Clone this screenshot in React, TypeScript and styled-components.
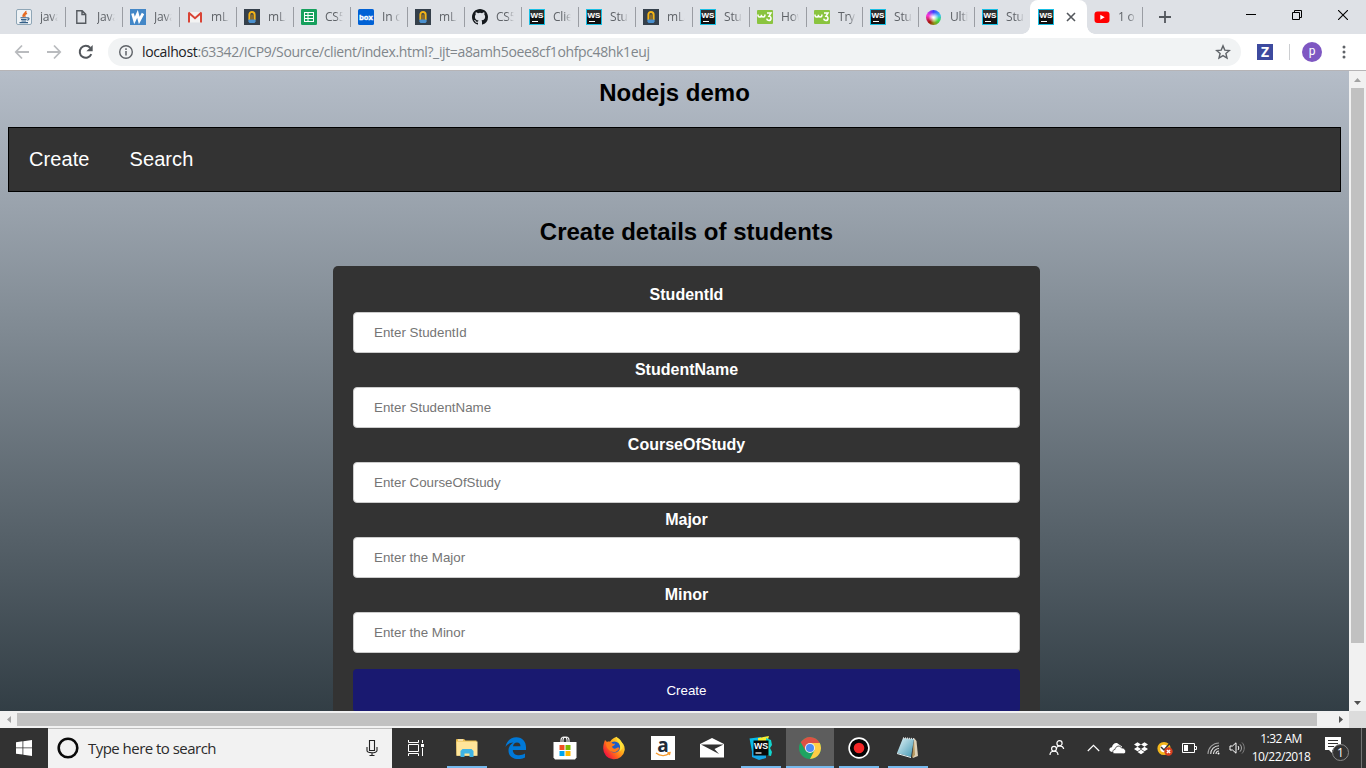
import React from "react";
import styled, { createGlobalStyle } from "styled-components";

const GlobalStyle = createGlobalStyle`
  * { box-sizing: border-box; }
  html, body { margin: 0; padding: 0; overflow: hidden; }
`;

const UI_FONT = '"Open Sans", "Noto Sans", sans-serif';
const PAGE_FONT = '"Liberation Sans", Arial, sans-serif';

const Screen = styled.div`
  width: 1366px;
  height: 768px;
  display: flex;
  flex-direction: column;
  overflow: hidden;
  background: #fff;
  font-family: ${UI_FONT};
`;

/* ---------- Tab strip ---------- */

const TabStrip = styled.div`
  height: 34px;
  flex: none;
  display: flex;
  padding-left: 9px;
  background: #dee1e6;
`;

const TabItem = styled.div<{ $width: number; $divider: boolean }>`
  width: ${(p) => p.$width}px;
  height: 34px;
  flex: none;
  display: flex;
  align-items: center;
  gap: 8px;
  padding-left: 7px;
  background: linear-gradient(#9a9da3, #9a9da3) right 7px / 1px ${(p) => (p.$divider ? 20 : 0)}px no-repeat;
`;

const ActiveTab = styled(TabItem)`
  gap: 11px;
  background: #fff;
  padding-left: 8px;
  border-radius: 8px 8px 0 0;
  position: relative;
  &::before, &::after {
    content: "";
    position: absolute;
    bottom: 0;
    width: 8px;
    height: 8px;
  }
  &::before { left: -8px; background: radial-gradient(circle at 0 0, transparent 7.5px, #fff 8px); }
  &::after { right: -8px; background: radial-gradient(circle at 100% 0, transparent 7.5px, #fff 8px); }
`;

const TabTitle = styled.span`
  width: 18px;
  overflow: hidden;
  white-space: nowrap;
  font-size: 12px;
  line-height: 16px;
  letter-spacing: -0.2px;
  color: #5f6368;
  mask-image: linear-gradient(to right, #000 60%, transparent);
`;

const NewTab = styled.div`
  width: 44px;
  display: flex;
  align-items: center;
  justify-content: center;
`;

const WindowButtons = styled.div`
  margin-left: auto;
  display: flex;
  height: 29px;
`;

const WindowButton = styled.div`
  width: 46px;
  display: flex;
  align-items: center;
  justify-content: center;
`;

/* ---------- Toolbar ---------- */

const Toolbar = styled.div`
  height: 37px;
  flex: none;
  display: flex;
  align-items: center;
  background: #fff;
  border-bottom: 1px solid #b6b4b6;
`;

const NavButtons = styled.div`
  width: 108px;
  display: flex;
  align-items: center;
  gap: 16px;
  padding-left: 14px;
`;

const AddressBar = styled.div`
  width: 1133px;
  height: 28px;
  border-radius: 14px;
  background: #f1f3f4;
  display: flex;
  align-items: center;
  padding: 0 10px;
`;

const Url = styled.span`
  flex: 1;
  margin-left: 8px;
  padding-bottom: 1px;
  font-size: 14px;
  letter-spacing: -0.365px;
  white-space: nowrap;
  color: #80868b;
  b { font-weight: 400; color: #202124; }
`;

const Extension = styled.div`
  width: 16px;
  height: 16px;
  margin-left: 16px;
  background: #3d4a9f;
  color: #fff;
  font: 700 14px/16px ${UI_FONT};
  text-align: center;
`;

const ToolbarRule = styled.div`
  width: 1px;
  height: 16px;
  margin: 0 12px 0 16px;
  background: #ccced1;
`;

const Avatar = styled.div`
  width: 20px;
  height: 20px;
  border-radius: 50%;
  background: #7e57c2;
  color: #fff;
  font: 400 12px/18px Roboto, sans-serif;
  text-align: center;
  margin-right: 19px;
`;

/* ---------- Page ---------- */

const Viewport = styled.div`
  height: 657px;
  flex: none;
  display: grid;
  grid-template-columns: 1349px 17px;
  grid-template-rows: 640px 17px;
`;

const Page = styled.div`
  height: 640px;
  overflow: hidden;
  padding: 8px;
  font-family: ${PAGE_FONT};
  background: linear-gradient(to bottom, #b5bdc8 0%, #828c95 36%, #28343b 100%) 0 0 / 100% 690px;
`;

const Heading = styled.h2`
  margin: 0;
  height: 28px;
  font-size: 24px;
  line-height: 28px;
  text-align: center;
  color: #000;
`;

const NavBar = styled.nav`
  height: 65px;
  margin-top: 20px;
  padding-bottom: 2px;
  border: 1px solid #000;
  background: #333;
  display: flex;
  align-items: center;
`;

const NavLink = styled.a`
  padding: 0 20px;
  font-size: 20px;
  line-height: 24px;
  letter-spacing: 0.08px;
  color: #fff;
`;

const Section = styled.section`
  padding: 26px 0 0 24px;
  display: flex;
  flex-direction: column;
  align-items: center;
`;

const Form = styled.div`
  width: 707px;
  margin-top: 20px;
  padding: 20px;
  border-radius: 5px;
  background: #333;
  display: flex;
  flex-direction: column;
`;

const Label = styled.label`
  height: 18px;
  font-size: 16px;
  font-weight: 700;
  line-height: 18px;
  text-align: center;
  color: #fff;
`;

const Input = styled.input`
  height: 41px;
  margin: 8px 0;
  padding: 0 20px;
  border: 1px solid #ccc;
  border-radius: 4px;
  background: #fff;
  font: 13.333px ${PAGE_FONT};
  &::placeholder { color: #757575; opacity: 1; }
`;

const SubmitButton = styled.button`
  height: 43px;
  flex: none;
  margin: 8px 0;
  border: 0;
  border-radius: 4px;
  background: #191970;
  color: #fff;
  font: 13.333px ${PAGE_FONT};
`;

const ScrollTrack = styled.div<{ $vertical?: boolean }>`
  display: flex;
  flex-direction: ${(p) => (p.$vertical ? "column" : "row")};
  align-items: center;
  background: #f1f1f1;
`;

const ScrollArrow = styled.div`
  width: 17px;
  height: 17px;
  flex: none;
  display: flex;
  align-items: center;
  justify-content: center;
`;

const ScrollThumb = styled.div<{ $w: number; $h: number }>`
  width: ${(p) => p.$w}px;
  height: ${(p) => p.$h}px;
  flex: none;
  background: #c1c1c1;
`;

const Spacer = styled.div`
  flex: 1;
`;

const ScrollCorner = styled.div`
  background: #dcdcdc;
`;

/* ---------- Taskbar ---------- */

const Taskbar = styled.div`
  height: 40px;
  flex: none;
  display: flex;
  background: #323232;
`;

const TaskButton = styled.div<{ $state?: "open" | "active" }>`
  width: 48px;
  height: 40px;
  flex: none;
  display: flex;
  align-items: center;
  justify-content: center;
  background: ${(p) => (p.$state === "active" ? "#5d5d5d" : "transparent")};
  ${(p) =>
    p.$state &&
    `background-image: linear-gradient(#76b9ed, #76b9ed);
     background-repeat: no-repeat;
     background-position: center bottom;
     background-size: ${p.$state === "active" ? 48 : 40}px 2px;`}
`;

const SearchBox = styled.div`
  width: 344px;
  display: flex;
  align-items: center;
  padding: 0 12px 1px 9px;
  background: #f2f2f2;
  border-top: 1px solid #bdbdbd;
`;

const SearchText = styled.span`
  flex: 1;
  margin-left: 9px;
  padding-bottom: 1px;
  font-size: 15px;
  letter-spacing: -0.53px;
  color: #2b2b2b;
`;

const AppButtons = styled.div`
  display: flex;
  gap: 1px;
  margin-left: 3px;
`;

const Tray = styled.div`
  margin-left: auto;
  display: flex;
  align-items: center;
`;

const TrayIcon = styled.div<{ $w?: number }>`
  width: ${(p) => p.$w ?? 24}px;
  height: 40px;
  display: flex;
  align-items: center;
  justify-content: center;
`;

const Clock = styled.div`
  width: 64px;
  font-size: 12px;
  line-height: 18px;
  letter-spacing: -0.5px;
  text-align: center;
  color: #fff;
  white-space: nowrap;
`;

const ShowDesktop = styled.div`
  width: 5px;
  height: 40px;
  border-left: 1px solid #737373;
`;

/* ---------- Icons ---------- */

const FavSvg = styled.svg`
  flex: none;
`;

const Fav = ({ children }: { children: React.ReactNode }) => (
  <FavSvg width="16" height="16" viewBox="0 0 16 16">{children}</FavSvg>
);

const JavaIcon = () => (
  <Fav>
    <rect x=".5" y=".5" width="15" height="15" rx="1.5" fill="#eef2f5" stroke="#8fa6b6" />
    <path d="M9.8 2c1 2-4.400 3-2.300 6M11 4.300C9 5.200 8 6 9.200 7.800" fill="none" stroke="#e66b22" strokeWidth="1.500" />
    <path d="M4.500 8.800h6.400M5 10.500h5.500M5.500 12h4.500M3.500 13.600h8.500M11 9c3-.6 2.500 2-.2 2.300" fill="none" stroke="#335f88" strokeWidth="1.100" />
  </Fav>
);
const FileIcon = () => (
  <Fav>
    <path d="M3.800 1.700h5.400l3.500 3.500v9.100H3.800zM9 1.900v3.600h3.500" fill="none" stroke="#555a5f" strokeWidth="1.400" />
  </Fav>
);
const WIcon = () => (
  <Fav>
    <rect width="16" height="16" fill="#4387c7" />
    <path d="M2.500 4.500l2 7 3-6.500 1.800 6.500L13 4.500" fill="none" stroke="#fff" strokeWidth="2.700" />
  </Fav>
);
const GmailIcon = () => (
  <Fav>
    <path d="M2 3h12v10.500H2z" fill="#f3f3f3" />
    <path d="M1.500 3.600L8 9.200l6.500-5.600" stroke="#d94436" strokeWidth="2" fill="none" />
    <path d="M2 13.500V3.800M14 13.500V3.800" stroke="#d94436" strokeWidth="2" />
  </Fav>
);
const MlabIcon = () => (
  <Fav>
    <rect width="16" height="16" fill="#35404b" />
    <path d="M5.400 11V5.500a2.600 2.600 0 0 1 5.200 0V11" fill="none" stroke="#f5b417" strokeWidth="2" />
    <path d="M8 5.500V11" stroke="#a87a24" strokeWidth="1.500" />
    <path d="M4.400 10.500h7.200v2.200L10.500 14h-5l-1.100-1.300z" fill="#4a90cf" />
  </Fav>
);
const SheetsIcon = () => (
  <Fav>
    <rect width="16" height="16" rx="1.200" fill="#16a05d" />
    <path d="M3 3h10v10H3z" fill="#fff" />
    <path d="M4 4h2.500v2H4zM7.500 4H12v2H7.500zM4 7h2.500v2H4zM7.500 7H12v2H7.500zM4 10h2.500v2H4zM7.500 10H12v2H7.500z" fill="#16a05d" />
  </Fav>
);
const BoxIcon = () => (
  <Fav>
    <rect width="16" height="16" rx="1.500" fill="#0061d5" />
    <text x="8" y="11" textAnchor="middle" fontFamily="Open Sans" fontWeight="700" fontSize="7.600" fill="#fff" stroke="#fff" strokeWidth=".35">box</text>
  </Fav>
);
const GithubIcon = () => (
  <Fav>
    <path fill="#15191d" d="M8 0C3.580 0 0 3.580 0 8c0 3.540 2.290 6.530 5.470 7.590.4.070.55-.17.55-.38 0-.19-.01-.82-.01-1.490-2.010.37-2.530-.49-2.690-.94-.09-.23-.48-.94-.82-1.130-.28-.15-.68-.52-.01-.53.63-.01 1.080.58 1.230.82.72 1.210 1.870.87 2.330.66.07-.52.28-.87.51-1.070-1.780-.2-3.640-.89-3.640-3.950 0-.87.31-1.590.82-2.150-.08-.2-.36-1.020.08-2.120 0 0 .67-.21 2.200.82a7.600 7.600 0 0 1 4 0c1.530-1.040 2.200-.82 2.200-.82.44 1.100.16 1.920.08 2.120.51.56.82 1.270.82 2.150 0 3.070-1.870 3.750-3.650 3.950.29.25.54.73.54 1.480 0 1.070-.01 1.930-.01 2.200 0 .21.15.46.55.38A8.010 8.010 0 0 0 16 8c0-4.420-3.580-8-8-8z" />
  </Fav>
);
const WsIcon = () => (
  <Fav>
    <rect x=".5" y=".5" width="15" height="15" fill="#111" stroke="#17bfe4" />
    <rect x="1" y="1" width="14" height="7" fill="#303030" />
    <text x="8" y="9" textAnchor="middle" fontFamily="Liberation Sans" fontWeight="700" fontSize="8" fill="#fff">WS</text>
    <path d="M3 12.500h6" stroke="#fff" strokeWidth="1" />
  </Fav>
);
const W3Icon = () => (
  <Fav>
    <rect y="1" width="16" height="14" rx="1" fill="#8ac43f" />
    <path d="M1 5.500v1c0 2 3.400 2 3.400 0v-.8.8c0 2 3.500 2 3.500 0v-1" fill="none" stroke="#fff" strokeWidth="1.500" />
    <path d="M10 4h4L12 7.200c2.800 0 2.600 4.300-.2 4.300-1.400 0-2-.9-2.100-1.800" fill="none" stroke="#fff" strokeWidth="1.500" />
  </Fav>
);
const Wheel = styled.div`
  width: 15px;
  height: 15px;
  margin-right: 1px;
  flex: none;
  border-radius: 50%;
  background:
    radial-gradient(circle, #fff 5%, transparent 50%),
    linear-gradient(150deg, transparent 60%, rgba(60, 0, 0, 0.2)),
    conic-gradient(#3f3bff, #39bdf5 70deg, #39ef50 120deg, #8fac1a 170deg, #a31505 220deg, #ff35d5 290deg, #3f3bff);
`;
const YoutubeIcon = () => (
  <Fav>
    <rect x=".5" y="2.500" width="15" height="11.500" rx="3" fill="#f00" />
    <path d="M6.300 5.700v5l4.400-2.500z" fill="#fff" />
  </Fav>
);

type TabData = { title: string; icon: React.ComponentType };

const tabsBefore: TabData[] = [
  { title: "java", icon: JavaIcon },
  { title: "Java", icon: FileIcon },
  { title: "Java", icon: WIcon },
  { title: "mLa", icon: GmailIcon },
  { title: "mLa", icon: MlabIcon },
  { title: "CS5", icon: SheetsIcon },
  { title: "In c", icon: BoxIcon },
  { title: "mLa", icon: MlabIcon },
  { title: "CS5", icon: GithubIcon },
  { title: "Clie", icon: WsIcon },
  { title: "Stu", icon: WsIcon },
  { title: "mLa", icon: MlabIcon },
  { title: "Stu", icon: WsIcon },
  { title: "How", icon: W3Icon },
  { title: "Tryi", icon: W3Icon },
  { title: "Stu", icon: WsIcon },
  { title: "Ulti", icon: Wheel },
  { title: "Stu", icon: WsIcon },
];

const fields = [
  { label: "StudentId", placeholder: "Enter StudentId" },
  { label: "StudentName", placeholder: "Enter StudentName" },
  { label: "CourseOfStudy", placeholder: "Enter CourseOfStudy" },
  { label: "Major", placeholder: "Enter the Major" },
  { label: "Minor", placeholder: "Enter the Minor" },
];

const Tabs = () => (
  <TabStrip>
    {tabsBefore.map((t, i) => (
      <TabItem key={i} $width={i < 14 ? 57 : i < 17 ? 56 : 55} $divider={i < 17}>
        <t.icon />
        <TabTitle>{t.title}</TabTitle>
      </TabItem>
    ))}
    <ActiveTab $width={57} $divider={false}>
      <WsIcon />
      <svg width="12" height="12" viewBox="0 0 12 12"><path d="M2 2l8 8M10 2l-8 8" stroke="#53575c" strokeWidth="1.600" /></svg>
    </ActiveTab>
    <TabItem $width={56} $divider>
      <YoutubeIcon />
      <TabTitle>1 o</TabTitle>
    </TabItem>
    <NewTab>
      <svg width="12" height="12" viewBox="0 0 12 12"><path d="M6 0v12M0 6h12" stroke="#53575c" strokeWidth="1.800" /></svg>
    </NewTab>
    <WindowButtons>
      <WindowButton><svg width="10" height="10"><path d="M0 4.500h10" stroke="#000" /></svg></WindowButton>
      <WindowButton>
        <svg width="10" height="10" fill="none" stroke="#000"><path d="M.5 2.500h7v7h-7zM2.500 2.500v-2h7v7h-2" /></svg>
      </WindowButton>
      <WindowButton><svg width="10" height="10"><path d="M0 0l10 10M10 0L0 10" stroke="#000" strokeWidth="1.100" /></svg></WindowButton>
    </WindowButtons>
  </TabStrip>
);

const BrowserToolbar = () => (
  <Toolbar>
    <NavButtons>
      <svg width="16" height="16" fill="none" stroke="#b9bbbe" strokeWidth="1.800"><path d="M15 8H2M8 1.500L1.800 8 8 14.500" /></svg>
      <svg width="16" height="16" fill="none" stroke="#b9bbbe" strokeWidth="1.800"><path d="M1 8h13M8 1.500L14.200 8 8 14.500" /></svg>
      <svg width="16" height="16" viewBox="0 0 16 16">
        <path d="M13.300 10.200A6 6 0 1 1 12.300 3.900" fill="none" stroke="#53575c" strokeWidth="2" />
        <path d="M14.700 1v6.300H8.400z" fill="#53575c" />
      </svg>
    </NavButtons>
    <AddressBar>
      <svg width="16" height="16" viewBox="0 0 16 16">
        <circle cx="8" cy="8" r="6.300" fill="none" stroke="#5f6368" strokeWidth="1.400" />
        <path d="M8 7v4.500M8 4.300V6" stroke="#5f6368" strokeWidth="1.500" />
      </svg>
      <Url><b>localhost</b>:63342/ICP9/Source/client/index.html?_ijt=a8amh5oee8cf1ohfpc48hk1euj</Url>
      <svg width="16" height="16" viewBox="0 0 16 16">
        <path d="M8 1.900l1.800 4.200 4.600.4-3.500 3 1.100 4.500-4-2.400L4 14l1.100-4.500-3.500-3 4.600-.4z" fill="none" stroke="#5f6368" strokeWidth="1.400" />
      </svg>
    </AddressBar>
    <Extension>Z</Extension>
    <ToolbarRule />
    <Avatar>p</Avatar>
    <svg width="6" height="14" viewBox="0 0 6 14" fill="#5f6368"><circle cx="3" cy="2" r="1.500" /><circle cx="3" cy="7" r="1.500" /><circle cx="3" cy="12" r="1.500" /></svg>
  </Toolbar>
);

const WebPage = () => (
  <Page>
    <Heading>Nodejs demo</Heading>
    <NavBar>
      <NavLink>Create</NavLink>
      <NavLink>Search</NavLink>
    </NavBar>
    <Section>
      <Heading>Create details of students</Heading>
      <Form>
        {fields.map((f) => (
          <React.Fragment key={f.label}>
            <Label>{f.label}</Label>
            <Input placeholder={f.placeholder} />
          </React.Fragment>
        ))}
        <SubmitButton>Create</SubmitButton>
      </Form>
    </Section>
  </Page>
);

const ExplorerIcon = () => (
  <svg width="22" height="20" viewBox="0 0 22 20">
    <path d="M0 1.500L1 1h7l1.500 1.500h11v15H.500z" fill="#e8bb4c" />
    <path d="M.500 3.500h21v14.300H.500z" fill="#ffe59a" />
    <path d="M2 2h5" stroke="#fff" />
    <path d="M4.500 19v-6l2-2h9l2 2v6h-4v-3.500h-5V19z" fill="#3fb4e5" />
  </svg>
);
const EdgeIcon = () => (
  <svg width="22" height="22" viewBox="0 0 22 22">
    <path d="M.500 10C1.500 4 6 .300 11.300.300c6.200 0 9.700 4.500 9.700 10V13H7.800c.2 4 3.300 5.300 6.200 5.300 2.300 0 4.200-.6 6-1.700v4c-2 1-4.300 1.500-6.700 1.500-6 0-9.800-3.300-9.800-8.600 0-3.700 2-6.400 4.900-8C5 5.800 2.200 7.200.500 10zM8 9.300h7.500c0-2.400-1.200-3.900-3.500-3.900-2.200 0-3.700 1.500-4 3.900z" fill="#0078d7" />
  </svg>
);
const StoreIcon = () => (
  <svg width="24" height="24" viewBox="0 0 24 24">
    <path d="M8 7V4c0-4 6-4 6 0v3M10 7V4c0-4 6-4 6 0v3" fill="none" stroke="#f5f5f5" strokeWidth="1.100" />
    <path d="M.500 6h23v15.500L22 23.500H2L.500 21.500z" fill="#fff" />
    <path d="M6.500 9h5v5h-5z" fill="#f25022" /><path d="M12.500 9h5v5h-5z" fill="#7fba00" />
    <path d="M6.500 15h5v5h-5z" fill="#00a4ef" /><path d="M12.500 15h5v5h-5z" fill="#ffb900" />
  </svg>
);
const FirefoxIcon = () => (
  <svg width="24" height="24" viewBox="0 0 24 24">
    <defs>
      <linearGradient id="fox" x1="0.9" y1="0.1" x2="0.1" y2="0.8">
        <stop offset="0" stopColor="#fff044" /><stop offset=".35" stopColor="#ffb31c" /><stop offset=".65" stopColor="#ff6a1b" /><stop offset="1" stopColor="#f2123e" />
      </linearGradient>
    </defs>
    <path d="M3 4l2 2c1-.5 2-.5 3-.3C10 3 12 1.500 15 .800c0 2 1 3 3 4.200 3 2 5 4.500 4.700 9A10.800 10.800 0 0 1 1.200 12.500C1.200 9 2 7 3 4z" fill="url(#fox)" />
    <circle cx="12.500" cy="11" r="5.600" fill="#1c5cc8" />
    <path d="M4 7c3-2 6-1 7 1l2-.4c-.2 2-1.500 2.500-3 3 .6 2.400 3 2.700 5 1.200 1.300-.8 2.500-.2 2.300.6-1.800 3.800-6 4.700-9 2.600C5 13 4 10 4 7z" fill="#ff7a1a" />
    <path d="M15 1.500c4 2 6.500 6 5.500 11l-3 3c1.500-4 .8-8-2.500-11z" fill="#ffe23a" />
  </svg>
);
const AmazonIcon = () => (
  <svg width="24" height="24" viewBox="0 0 24 24">
    <rect width="24" height="24" fill="#fff" />
    <text x="12" y="15.500" textAnchor="middle" fontFamily="Open Sans" fontWeight="700" fontSize="19" fill="#222b38">a</text>
    <path d="M5 17c4 3.300 10 3.300 13.300.600M16.200 16.900l2.800-.300-.600 2.500" fill="none" stroke="#f79b2e" strokeWidth="1.300" />
  </svg>
);
const MailIcon = () => (
  <svg width="24" height="20" viewBox="0 0 24 20">
    <path d="M0 6L12 0l12 6v13.500H0z" fill="#fff" />
    <path d="M1 6.500h22.500l-9 4.500 4.500 5z" fill="#323232" />
  </svg>
);
const WebstormIcon = () => (
  <svg width="24" height="24" viewBox="0 0 24 24">
    <path d="M.500 2.500L12 1l-1 21-7-1z" fill="#08bde8" /><path d="M9 2l11-2-2 7L9 8z" fill="#f4ee35" />
    <path d="M17 2l5 2 1 5-2 3 2 4-1 4-5-1z" fill="#12d5cf" /><path d="M3 14l14 4v4l-7 2-7-3z" fill="#14a6e8" />
    <rect x="4.500" y="4.500" width="15" height="15" fill="#080808" />
    <text x="12" y="12.500" textAnchor="middle" fontFamily="Liberation Sans" fontWeight="700" fontSize="8.800" fill="#fff">WS</text>
    <path d="M6.500 17h6" stroke="#fff" strokeWidth="1.200" />
  </svg>
);
const ChromeIcon = () => (
  <svg width="22" height="22" viewBox="0 0 22 22">
    <circle cx="11" cy="11" r="11" fill="#1da462" />
    <path d="M11 11L6.500 13.500 1.700 5.300A11 11 0 0 1 20.500 5.500L20.800 6H11z" fill="#dd5144" />
    <path d="M11 6h9.800A11 11 0 0 1 11 22l4.400-8.500z" fill="#ffcd46" />
    <circle cx="11" cy="11" r="5" fill="#f1f1f1" /><circle cx="11" cy="11" r="4" fill="#4c8bf5" />
  </svg>
);
const RecordIcon = () => (
  <svg width="22" height="22" viewBox="0 0 22 22">
    <circle cx="11" cy="11" r="9.900" fill="#050505" stroke="#fff" strokeWidth="1.600" /><circle cx="11" cy="11" r="5.300" fill="#f32525" />
  </svg>
);
const NotepadIcon = () => (
  <svg width="24" height="24" viewBox="0 0 24 24">
    <defs><linearGradient id="pad" x1="0" x2="1" y2="1"><stop stopColor="#e4f5f8" /><stop offset="1" stopColor="#4197b3" /></linearGradient></defs>
    <path d="M18 2l2.500 3 1.500 15-5 2z" fill="#ddd1b7" /><path d="M18 4l1 15-3 3z" fill="#b99a60" />
    <path d="M7 2l11 1-3 18-14-4z" fill="url(#pad)" /><path d="M7 2l12 1" stroke="#ddd" strokeWidth="1.600" strokeDasharray="1 1" />
    <path d="M1 17.500l14 4" stroke="#e8f4f6" />
  </svg>
);

const apps: { icon: React.ComponentType; state?: "open" | "active" }[] = [
  { icon: ExplorerIcon, state: "open" },
  { icon: EdgeIcon },
  { icon: StoreIcon },
  { icon: FirefoxIcon },
  { icon: AmazonIcon },
  { icon: MailIcon },
  { icon: WebstormIcon, state: "open" },
  { icon: ChromeIcon, state: "active" },
  { icon: RecordIcon, state: "open" },
  { icon: NotepadIcon, state: "open" },
];

const SystemTray = () => (
  <Tray>
    <TrayIcon $w={48}>
      <svg width="16" height="16" fill="none" stroke="#fff" strokeWidth="1.200">
        <circle cx="10.500" cy="3.300" r="2.600" /><path d="M7.500 9c0-4 6.500-4 7.200 0" />
        <circle cx="5" cy="8.800" r="2.400" /><path d="M1 15c0-5 8-5 8 0" />
      </svg>
    </TrayIcon>
    <TrayIcon><svg width="13" height="8"><path d="M.800 7l5.700-5.700L12.200 7" fill="none" stroke="#fff" strokeWidth="1.200" /></svg></TrayIcon>
    <TrayIcon>
      <svg width="17" height="13" viewBox="0 0 17 13">
        <path d="M3 10C-1 9.500 0 5 3 5.200 3.500 1 8-.500 10 2.500l3 2V10z" fill="#fff" />
        <path d="M6 11.800C3 11.800 3 7.600 6 7.500c.500-4 5.500-4.500 6.500-1.500 4.500-.500 5.500 5.800 2 5.800z" fill="#fff" stroke="#323232" strokeWidth=".8" />
      </svg>
    </TrayIcon>
    <TrayIcon>
      <svg width="14" height="13" viewBox="0 0 14 13" fill="#fff">
        <path d="M0 2.500L3.500.300 7 2.500 3.500 4.800zM7 2.500L10.500.300 14 2.500l-3.500 2.300zM0 7l3.500-2.200L7 7 3.500 9.200zM7 7l3.500-2.200L14 7l-3.500 2.200zM3.500 10L7 7.800l3.500 2.200L7 12.300z" />
      </svg>
    </TrayIcon>
    <TrayIcon>
      <svg width="16" height="16" viewBox="0 0 16 16">
        <circle cx="7" cy="8.500" r="5.200" fill="#fff" stroke="#f5b81c" strokeWidth="2.800" />
        <path d="M4 7l3 3 7-8" stroke="#333" strokeWidth="1.500" fill="none" />
        <circle cx="11.500" cy="11.500" r="4.200" fill="#d8411f" /><path d="M9.900 9.900l3.200 3.200M13.100 9.900l-3.200 3.200" stroke="#fff" strokeWidth="1.400" />
      </svg>
    </TrayIcon>
    <TrayIcon $w={25}>
      <svg width="15" height="10"><path d="M.500.500h12v9H.500zM12.500 3.500h2v3h-2" fill="none" stroke="#fff" /><path d="M2 2h4v6H2z" fill="#fff" /></svg>
    </TrayIcon>
    <TrayIcon $w={23}>
      <svg width="13" height="13" viewBox="0 0 13 13" fill="none" stroke="#e0e0e0" strokeWidth="1.100">
        <path d="M9 12a3 3 0 0 1 3-3M6.500 12A5.500 5.500 0 0 1 12 6.500M3.700 12A8.300 8.300 0 0 1 12 3.700" /><path d="M1 12A11 11 0 0 1 12 1" stroke="#a0a0a0" />
        <circle cx="11.500" cy="11.500" r="1" fill="#fff" stroke="none" />
      </svg>
    </TrayIcon>
    <TrayIcon>
      <svg width="17" height="14" viewBox="0 0 17 14" fill="none" stroke="#fff">
        <path d="M1 5h2.500L7 1.800v10.400L3.500 9H1zM9 5c1 1 1 3 0 4" /><path d="M11 3.300c2 2 2 5.400 0 7.400" stroke="#aaa" /><path d="M13 1.500c3 3 3 8 0 11" stroke="#808080" />
      </svg>
    </TrayIcon>
    <Clock>1:32 AM<br />10/22/2018</Clock>
    <TrayIcon $w={48}>
      <svg width="26" height="26" viewBox="0 0 26 26">
        <path d="M1 2h16v13H8v3l-3-3H1z" fill="#fff" /><path d="M4 5.500h10M4 8.500h10M4 11.500h6" stroke="#323232" />
        <circle cx="16.500" cy="17.500" r="8" fill="#323232" stroke="#8a8a8a" />
        <text x="16.500" y="22" textAnchor="middle" fontFamily="Open Sans" fontSize="12" fill="#fff">1</text>
      </svg>
    </TrayIcon>
    <ShowDesktop />
  </Tray>
);

export default function App() {
  return (
    <Screen>
      <GlobalStyle />
      <Tabs />
      <BrowserToolbar />
      <Viewport>
        <WebPage />
        <ScrollTrack $vertical>
          <ScrollArrow><svg width="7" height="4"><path d="M0 4L3.500 0 7 4z" fill="#a3a3a3" /></svg></ScrollArrow>
          <ScrollThumb $w={13} $h={555} />
          <Spacer />
          <ScrollArrow><svg width="7" height="4"><path d="M0 0l3.500 4L7 0z" fill="#505050" /></svg></ScrollArrow>
        </ScrollTrack>
        <ScrollTrack>
          <ScrollArrow><svg width="4" height="7"><path d="M4 0L0 3.500 4 7z" fill="#a3a3a3" /></svg></ScrollArrow>
          <ScrollThumb $w={1300} $h={13} />
          <Spacer />
          <ScrollArrow><svg width="4" height="7"><path d="M0 0l4 3.500L0 7z" fill="#505050" /></svg></ScrollArrow>
        </ScrollTrack>
        <ScrollCorner />
      </Viewport>
      <Taskbar>
        <TaskButton>
          <svg width="16" height="16" viewBox="0 0 16 16" fill="#fff"><path d="M0 2.200L6.500 1.300v6.200H0zM7.300 1.200L16 0v7.500H7.300zM0 8.300h6.500v6.300L0 13.700zM7.300 8.300H16V16l-8.700-1.200z" /></svg>
        </TaskButton>
        <SearchBox>
          <svg width="22" height="22"><circle cx="11" cy="11" r="9.300" fill="none" stroke="#0a0a0a" strokeWidth="2.600" /></svg>
          <SearchText>Type here to search</SearchText>
          <svg width="16" height="18" fill="none" stroke="#222" strokeWidth="1.100"><path d="M5.500 1.500h5v10h-5zM3 8v3.500c0 3 10 3 10 0V8M8 14v2.500M5.500 16.500h5" /></svg>
        </SearchBox>
        <TaskButton>
          <svg width="17" height="16" fill="none" stroke="#fff"><path d="M.500 4.500h10v7H.500zM.500 0v2.500h10V0M.500 16v-2.500h10V16M14.500 0v3M14.500 8v8" /><path d="M13 4h3v3h-3z" fill="#fff" stroke="none" /></svg>
        </TaskButton>
        <AppButtons>
          {apps.map((a, i) => (
            <TaskButton key={i} $state={a.state}><a.icon /></TaskButton>
          ))}
        </AppButtons>
        <SystemTray />
      </Taskbar>
    </Screen>
  );
}
